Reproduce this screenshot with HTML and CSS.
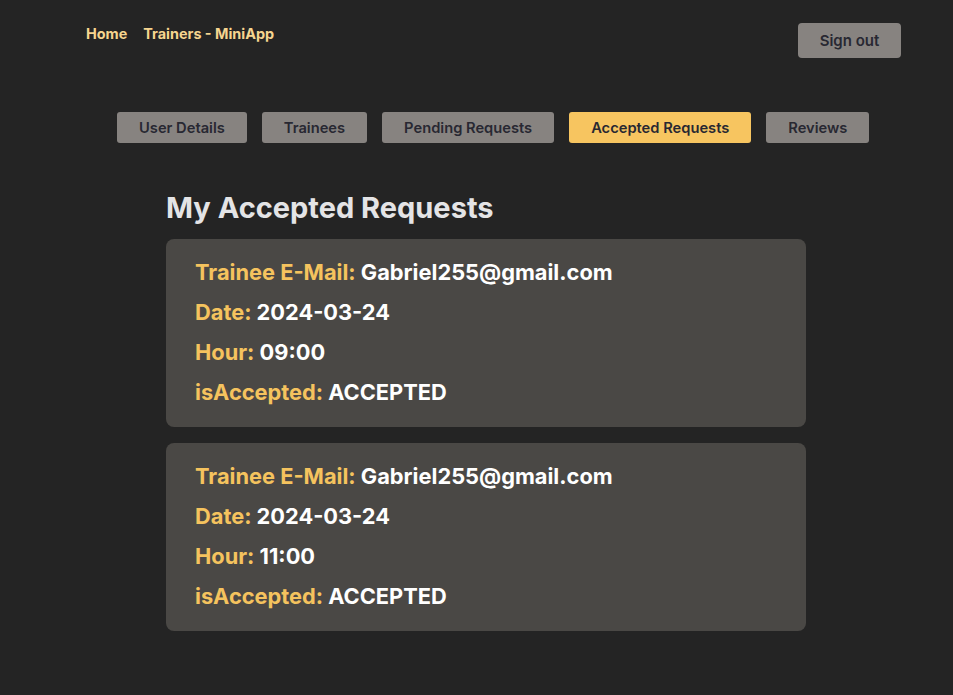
FILE: index.html
```html
<!DOCTYPE html>
<html lang="en">
<head>
<meta charset="utf-8">
<title>Trainers - MiniApp</title>
<link rel="stylesheet" href="styles.css">
</head>
<body>
<header class="topbar">
  <nav class="nav">
    <a class="nav-link" href="#">Home</a>
    <a class="nav-link" href="#">Trainers - MiniApp</a>
  </nav>
  <button class="signout">Sign out</button>
</header>
<div class="tabs">
  <button class="tab">User Details</button>
  <button class="tab">Trainees</button>
  <button class="tab">Pending Requests</button>
  <button class="tab tab-active">Accepted Requests</button>
  <button class="tab">Reviews</button>
</div>
<main class="content">
  <h2 class="title">My Accepted Requests</h2>
  <div class="cards">
    <div class="card">
      <p><span class="label">Trainee E-Mail:</span> Gabriel255@gmail.com</p>
      <p><span class="label">Date:</span> 2024-03-24</p>
      <p><span class="label">Hour:</span> 09:00</p>
      <p><span class="label">isAccepted:</span> ACCEPTED</p>
    </div>
    <div class="card">
      <p><span class="label">Trainee E-Mail:</span> Gabriel255@gmail.com</p>
      <p><span class="label">Date:</span> 2024-03-24</p>
      <p><span class="label">Hour:</span> 11:00</p>
      <p><span class="label">isAccepted:</span> ACCEPTED</p>
    </div>
  </div>
</main>
</body>
</html>
```
FILE: styles.css
```css
html, body {
  margin: 0;
  padding: 0;
}
body {
  background: #242424;
  font-family: Inter, "Noto Sans", sans-serif;
  min-height: 695px;
}
.topbar {
  display: flex;
  justify-content: space-between;
  align-items: flex-start;
  padding: 23px 52px 0 86px;
}
.nav {
  display: flex;
  gap: 16px;
}
.nav-link {
  color: #f6d58f;
  font-size: 14.4px;
  font-weight: 700;
  line-height: 22px;
  text-decoration: none;
}
.signout {
  width: 103px;
  height: 35px;
  border: none;
  border-radius: 4px;
  background: #878380;
  color: #282832;
  font-family: Inter, sans-serif;
  font-size: 15px;
  font-weight: 600;
  padding: 0;
}
.tabs {
  display: flex;
  gap: 15px;
  margin: 54px 0 0 117px;
}
.tab {
  height: 31px;
  padding: 0 22px;
  border: none;
  border-radius: 3px;
  background: #878380;
  color: #282832;
  font-family: Inter, sans-serif;
  font-size: 14.7px;
  font-weight: 600;
}
.tab-active {
  background: #f7c560;
}
.content {
  margin-left: 166px;
  width: 640px;
}
.title {
  margin: 48px 0 14px;
  color: #e4e4e6;
  font-size: 29px;
  line-height: 34px;
  font-weight: 700;
}
.cards {
  display: flex;
  flex-direction: column;
  gap: 16px;
}
.card {
  background: #4a4845;
  border-radius: 8px;
  padding: 13px 29px 15px;
}
.card p {
  margin: 0;
  color: #ffffff;
  font-size: 21.8px;
  font-weight: 700;
  line-height: 40px;
}
.label {
  color: #f5c35e;
}
```
